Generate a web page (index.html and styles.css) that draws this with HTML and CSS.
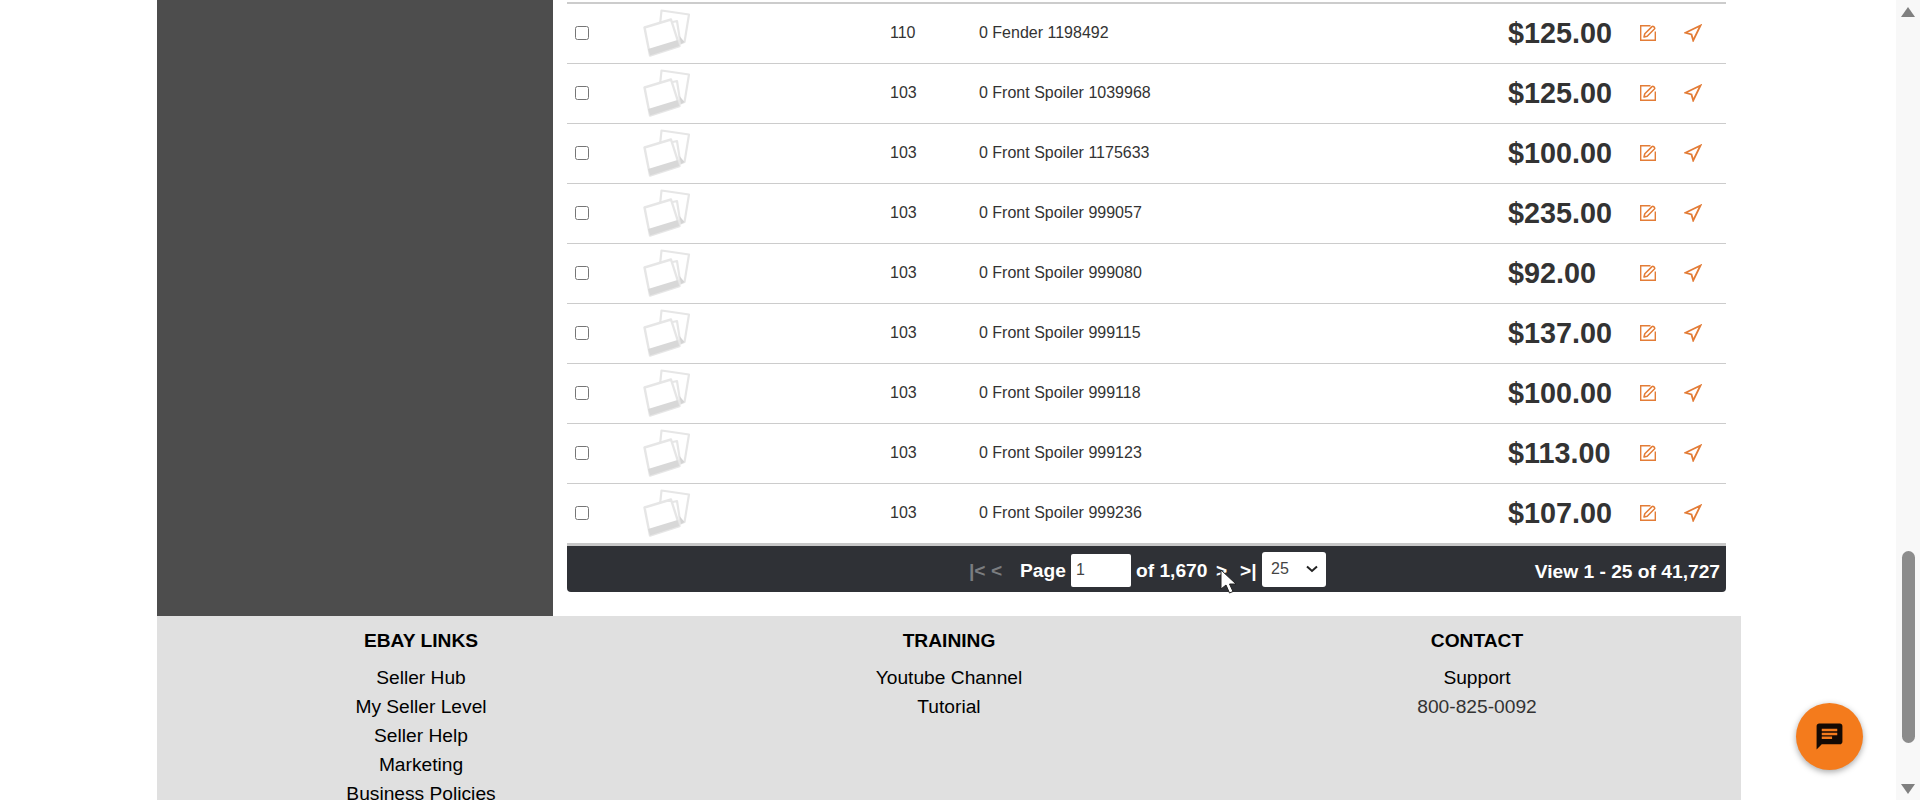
FILE: index.html
```html
<!DOCTYPE html>
<html lang="en">
<head>
  <meta charset="UTF-8">
  <title>Inventory</title>
  <link rel="stylesheet" href="styles.css">
</head>
<body>
  <svg class="defs" width="0" height="0">
    <symbol id="photo" viewBox="0 0 48 48">
      <path d="M18.5 1.5 L46 5.5 L41.5 33 L37.5 34.5 L34 12 L17 16 Z" fill="#fff" stroke="#e6e6e6" stroke-width="2.2" stroke-linejoin="round"/>
      <path d="M36.5 27 L41.5 33 L38 35 Z" fill="#d4d4d4"/>
      <path d="M1.5 18.5 L28 10.5 L36.5 37 L7 46.5 Z" fill="#fff" stroke="#e6e6e6" stroke-width="2.4" stroke-linejoin="round"/>
      <path d="M5 40 L34.5 31 L36.5 37 L7 46.5 Z" fill="#d8d8d8"/>
    </symbol>
    <symbol id="edit" viewBox="0 0 16 16">
      <path d="M10.5 0.7 H0.7 V15.3 H15.3 V6.5" fill="none" stroke="#e37c36" stroke-width="1.4"/>
      <path d="M4 12 L4.8 8.8 L12 1.6 Q12.8 0.9 13.6 1.6 L14.4 2.4 Q15.1 3.2 14.4 4 L7.2 11.2 Z" fill="none" stroke="#e37c36" stroke-width="1.5" stroke-linejoin="round"/>
    </symbol>
    <symbol id="send" viewBox="0 0 18 18">
      <path d="M16.5 1.5 L1.5 8.8 L7.5 10.5 L9.2 16.5 Z" fill="none" stroke="#e37c36" stroke-width="1.8" stroke-linejoin="miter"/>
    </symbol>
  </svg>

  <div class="wrapper">
    <div class="content">
      <aside class="sidebar"></aside>
      <main class="listing">
        <table class="items">
          <colgroup>
            <col class="c-check"><col class="c-photo"><col class="c-id"><col class="c-name"><col class="c-price"><col class="c-edit"><col class="c-send">
          </colgroup>
          <tr>
            <td><input type="checkbox"></td>
            <td><svg class="photo"><use href="#photo"/></svg></td>
            <td>110</td>
            <td>0 Fender 1198492</td>
            <td class="price">$125.00</td>
            <td><svg class="edit"><use href="#edit"/></svg></td>
            <td><svg class="send"><use href="#send"/></svg></td>
          </tr>
          <tr>
            <td><input type="checkbox"></td>
            <td><svg class="photo"><use href="#photo"/></svg></td>
            <td>103</td>
            <td>0 Front Spoiler 1039968</td>
            <td class="price">$125.00</td>
            <td><svg class="edit"><use href="#edit"/></svg></td>
            <td><svg class="send"><use href="#send"/></svg></td>
          </tr>
          <tr>
            <td><input type="checkbox"></td>
            <td><svg class="photo"><use href="#photo"/></svg></td>
            <td>103</td>
            <td>0 Front Spoiler 1175633</td>
            <td class="price">$100.00</td>
            <td><svg class="edit"><use href="#edit"/></svg></td>
            <td><svg class="send"><use href="#send"/></svg></td>
          </tr>
          <tr>
            <td><input type="checkbox"></td>
            <td><svg class="photo"><use href="#photo"/></svg></td>
            <td>103</td>
            <td>0 Front Spoiler 999057</td>
            <td class="price">$235.00</td>
            <td><svg class="edit"><use href="#edit"/></svg></td>
            <td><svg class="send"><use href="#send"/></svg></td>
          </tr>
          <tr>
            <td><input type="checkbox"></td>
            <td><svg class="photo"><use href="#photo"/></svg></td>
            <td>103</td>
            <td>0 Front Spoiler 999080</td>
            <td class="price">$92.00</td>
            <td><svg class="edit"><use href="#edit"/></svg></td>
            <td><svg class="send"><use href="#send"/></svg></td>
          </tr>
          <tr>
            <td><input type="checkbox"></td>
            <td><svg class="photo"><use href="#photo"/></svg></td>
            <td>103</td>
            <td>0 Front Spoiler 999115</td>
            <td class="price">$137.00</td>
            <td><svg class="edit"><use href="#edit"/></svg></td>
            <td><svg class="send"><use href="#send"/></svg></td>
          </tr>
          <tr>
            <td><input type="checkbox"></td>
            <td><svg class="photo"><use href="#photo"/></svg></td>
            <td>103</td>
            <td>0 Front Spoiler 999118</td>
            <td class="price">$100.00</td>
            <td><svg class="edit"><use href="#edit"/></svg></td>
            <td><svg class="send"><use href="#send"/></svg></td>
          </tr>
          <tr>
            <td><input type="checkbox"></td>
            <td><svg class="photo"><use href="#photo"/></svg></td>
            <td>103</td>
            <td>0 Front Spoiler 999123</td>
            <td class="price">$113.00</td>
            <td><svg class="edit"><use href="#edit"/></svg></td>
            <td><svg class="send"><use href="#send"/></svg></td>
          </tr>
          <tr>
            <td><input type="checkbox"></td>
            <td><svg class="photo"><use href="#photo"/></svg></td>
            <td>103</td>
            <td>0 Front Spoiler 999236</td>
            <td class="price">$107.00</td>
            <td><svg class="edit"><use href="#edit"/></svg></td>
            <td><svg class="send"><use href="#send"/></svg></td>
          </tr>
        </table>
        <div class="pager">
          <div class="pager-controls">
            <span class="muted">|&lt; &lt;</span>
            <span class="page-label">Page</span>
            <input class="page-input" type="text" value="1">
            <span class="page-of">of 1,670</span>
            <span class="page-next">&gt;</span>
            <span class="page-last">&gt;|</span>
            <span class="page-size">25
              <svg width="12" height="8" viewBox="0 0 12 8"><path d="M1 1.5 L6 6 L11 1.5" fill="none" stroke="#222" stroke-width="2"/></svg>
            </span>
          </div>
          <div class="pager-count">View 1 - 25 of 41,727</div>
        </div>
      </main>
    </div>
    <footer class="footer">
      <div class="footer-col">
        <h4>EBAY LINKS</h4>
        <a>Seller Hub</a>
        <a>My Seller Level</a>
        <a>Seller Help</a>
        <a>Marketing</a>
        <a>Business Policies</a>
      </div>
      <div class="footer-col">
        <h4>TRAINING</h4>
        <a>Youtube Channel</a>
        <a>Tutorial</a>
      </div>
      <div class="footer-col">
        <h4>CONTACT</h4>
        <a>Support</a>
        <a class="phone">800-825-0092</a>
      </div>
    </footer>
  </div>

  <!-- mouse pointer from the capture -->
  <svg class="cursor" width="18" height="26" viewBox="0 0 18 26">
    <path d="M1 1 L1 20 L6 16 L9.5 24 L13 22.5 L9.5 15 L16 15 Z" fill="#fff" stroke="#222" stroke-width="1"/>
  </svg>

  <button class="chat">
    <svg width="31" height="31" viewBox="0 0 24 24"><path fill="#140a04" d="M20 2H4c-1.1 0-1.99.9-1.99 2L2 22l4-4h14c1.1 0 2-.9 2-2V4c0-1.1-.9-2-2-2zM6 9h12v2H6V9zm8 5H6v-2h8v2zm4-6H6V6h12v2z"/></svg>
  </button>

  <div class="scrollbar">
    <span class="arrow-up"></span>
    <span class="thumb"></span>
    <span class="arrow-down"></span>
  </div>
</body>
</html>
```

FILE: styles.css
```css
html, body {
  height: 800px;
  margin: 0;
  overflow: hidden;
}
body {
  background: #fff;
  color: #333;
  font-family: "Liberation Sans", Arial, sans-serif;
}
.defs {
  display: block;
  height: 0;
}
.wrapper {
  width: 1584px;
  margin-left: 157px;
}
.content {
  display: flex;
  height: 616px;
}
.sidebar {
  width: 396px;
  background: #4d4d4d;
}
.listing {
  width: 1159px;
  margin-left: 14px;
  padding-top: 2px;
}

/* table */
.items {
  width: 100%;
  table-layout: fixed;
  border-collapse: collapse;
  font-size: 16px;
}
.c-check { width: 73px; }
.c-photo { width: 250px; }
.c-id { width: 89px; }
.c-name { width: 529px; }
.c-price { width: 132px; }
.c-edit { width: 44px; }
.c-send { width: 42px; }
.items tr {
  height: 60px;
  border-top: 1px solid #ccc;
}
.items tr:first-child {
  border-top: 2px solid #ccc;
}
.items td {
  padding: 0;
  vertical-align: middle;
}
.items td:first-child {
  padding-left: 8px;
}
.items input[type="checkbox"] {
  display: block;
  width: 14px;
  height: 14px;
  margin: 0;
}
.price {
  font-size: 28.8px;
  font-weight: bold;
}
.photo {
  display: block;
  width: 48px;
  height: 48px;
  margin-left: 3px;
}
.edit {
  display: block;
  width: 16px;
  height: 16px;
}
.send {
  display: block;
  width: 18px;
  height: 18px;
}

/* pager */
.pager {
  display: flex;
  justify-content: space-between;
  align-items: center;
  height: 46px;
  padding-right: 6px;
  background: #2f3136;
  border-top: 3px solid #c8c8c8;
  border-radius: 0 0 4px 4px;
  color: #fff;
  font-size: 19.2px;
  font-weight: bold;
}
.pager-controls {
  display: flex;
  align-items: center;
  height: 35px;
  margin-left: 402px;
}
.pager-controls > span {
  margin-top: 4px;
}
.muted {
  color: #7b7d80;
  width: 51px;
}
.page-label {
  width: 51px;
}
.page-input {
  width: 60px;
  height: 33px;
  margin-top: 2px;
  box-sizing: border-box;
  padding: 2px 5px;
  border: 0;
  border-radius: 2px;
  font: 16px "Liberation Sans", Arial, sans-serif;
  color: #444;
}
.page-of {
  margin-left: 5px;
  width: 80px;
}
.page-next {
  width: 24px;
}
.page-last {
  width: 22px;
}
.pager-controls > .page-size {
  display: flex;
  justify-content: space-between;
  align-items: center;
  box-sizing: border-box;
  width: 64px;
  height: 35px;
  margin-top: 0;
  padding: 0 8px 0 9px;
  background: #fff;
  border-radius: 3px;
  color: #444;
  font-size: 16px;
  font-weight: normal;
}
.pager-count {
  margin-top: 6px;
}

/* footer */
.footer {
  display: grid;
  grid-template-columns: repeat(3, 1fr);
  height: 184px;
  background: #e0e0e0;
  color: #000;
  text-align: center;
  font-size: 19.2px;
  line-height: 29px;
}
.footer-col h4 {
  margin: 10px 0 8px;
  font-size: 19.2px;
}
.footer-col a {
  display: block;
}
.footer-col .phone {
  color: #333;
}

/* things sitting over the page */
.cursor {
  position: fixed;
  left: 1220px;
  top: 569px;
}
.chat {
  position: fixed;
  left: 1796px;
  top: 703px;
  display: flex;
  align-items: center;
  justify-content: center;
  width: 67px;
  height: 67px;
  padding: 0;
  border: 0;
  border-radius: 50%;
  background: #f47b1c;
  box-shadow: 0 2px 6px rgba(0, 0, 0, 0.35);
}
.scrollbar {
  position: fixed;
  top: 0;
  right: 0;
  width: 24px;
  height: 800px;
  background: #f8f8f8;
}
.thumb {
  position: absolute;
  left: 6px;
  top: 551px;
  width: 13px;
  height: 192px;
  border-radius: 7px;
  background: #8c8c8c;
}
.arrow-up,
.arrow-down {
  position: absolute;
  left: 5px;
  width: 0;
  height: 0;
  border-left: 7.5px solid transparent;
  border-right: 7.5px solid transparent;
}
.arrow-up {
  top: 7px;
  border-bottom: 10px solid #808080;
}
.arrow-down {
  top: 784px;
  border-top: 10px solid #808080;
}
```
